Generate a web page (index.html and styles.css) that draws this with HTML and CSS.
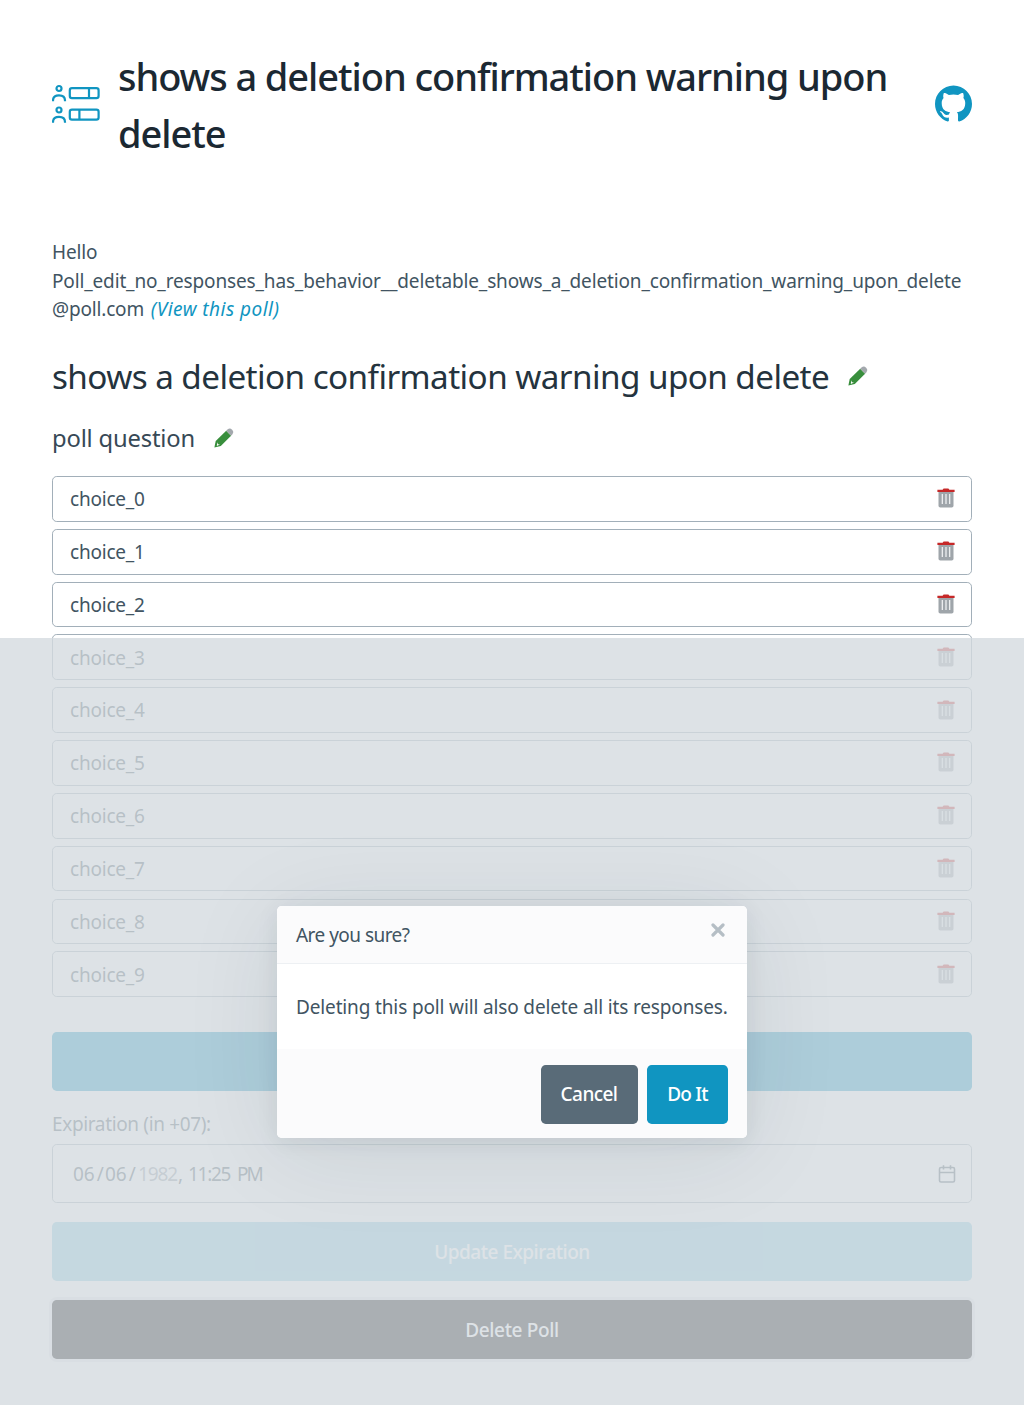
FILE: index.html
```html
<!DOCTYPE html>
<html lang="en">
<head>
<meta charset="utf-8">
<title>Edit poll</title>
<link rel="stylesheet" href="styles.css">
</head>
<body>
<svg class="defs" aria-hidden="true">
  <symbol id="trash" viewBox="0 0 18 20">
    <path fill="#9fa5aa" d="M1.500 3.500h15v14.200q0 1.800-1.800 1.800H3.300Q1.500 19.500 1.500 17.700z"/>
    <path fill="none" stroke="#f4f6f7" stroke-width="1.200" d="M5.300 6v10M9 6v10M12.700 6v10"/>
    <path fill="#c62828" d="M.4 1.800h5.200l1-1.300h4.800l1 1.300h5.200V4H.4z"/>
  </symbol>
  <symbol id="pencil" viewBox="0 0 20 20">
    <path fill="#388e3c" d="M.4 19.400L1.700 13 12.200 2.800l4.900 4.900L6.800 17.900z"/>
    <path fill="#a3a8ad" d="M12.200 2.800l1.300-1.300q2.400-1.900 4.600.2t.3 4.600l-1.300 1.400z"/>
    <path fill="#fff" d="M3.300 14.300l.7 1.900 2 .4-3.200 1.300z"/>
  </symbol>
</svg>
<main class="container">
  <header class="masthead">
    <svg class="logo" viewBox="0 0 48 40" fill="none" stroke="#1095c1" stroke-width="2.200">
      <circle cx="7" cy="4.500" r="2.500"/><path d="M1 17.200v-.7C1 13 3.700 11.300 7 11.300s6 1.700 6 5.200v.7"/>
      <rect x="17.800" y="4.200" width="28.800" height="10" rx="2.200"/><path d="M37 4.200v10"/>
      <circle cx="7" cy="26" r="2.500"/><path d="M1 38.800v-.7c0-3.500 2.700-5.200 6-5.200s6 1.700 6 5.200v.7"/>
      <rect x="17.800" y="25.600" width="28.800" height="10" rx="2.200"/><path d="M27.400 25.600v10"/>
    </svg>
    <h1>shows a deletion confirmation warning upon<br>delete</h1>
    <svg class="github" viewBox="0 0 24 24" fill="#1095c1"><path d="M12 .297c-6.630 0-12 5.373-12 12 0 5.303 3.438 9.800 8.205 11.385.6.113.82-.258.82-.577 0-.285-.01-1.040-.015-2.040-3.338.724-4.042-1.610-4.042-1.610C4.422 18.070 3.633 17.700 3.633 17.700c-1.087-.744.084-.729.084-.729 1.205.084 1.838 1.236 1.838 1.236 1.070 1.835 2.809 1.305 3.495.998.108-.776.417-1.305.76-1.605-2.665-.3-5.466-1.332-5.466-5.930 0-1.310.465-2.380 1.235-3.220-.135-.303-.54-1.523.105-3.176 0 0 1.005-.322 3.300 1.230.96-.267 1.980-.399 3-.405 1.020.006 2.040.138 3 .405 2.280-1.552 3.285-1.230 3.285-1.230.645 1.653.24 2.873.12 3.176.765.84 1.230 1.910 1.230 3.220 0 4.610-2.805 5.625-5.475 5.920.42.36.81 1.096.81 2.220 0 1.606-.015 2.896-.015 3.286 0 .315.21.690.825.570C20.565 22.092 24 17.592 24 12.297c0-6.627-5.373-12-12-12"/></svg>
  </header>

  <p class="hello">Hello<br><span class="email">Poll_edit_no_responses_has_behavior__deletable_shows_a_deletion_confirmation_warning_upon_delete</span><br>@poll.com <a class="view">(View this poll)</a></p>

  <div class="editable poll-title"><h2>shows a deletion confirmation warning upon delete</h2><svg class="pencil"><use href="#pencil"/></svg></div>
  <div class="editable question"><h3>poll question</h3><svg class="pencil"><use href="#pencil"/></svg></div>

  <ul class="choices">
    <li>choice_0<svg class="trash"><use href="#trash"/></svg></li>
    <li>choice_1<svg class="trash"><use href="#trash"/></svg></li>
    <li>choice_2<svg class="trash"><use href="#trash"/></svg></li>
    <li>choice_3<svg class="trash"><use href="#trash"/></svg></li>
    <li>choice_4<svg class="trash"><use href="#trash"/></svg></li>
    <li>choice_5<svg class="trash"><use href="#trash"/></svg></li>
    <li>choice_6<svg class="trash"><use href="#trash"/></svg></li>
    <li>choice_7<svg class="trash"><use href="#trash"/></svg></li>
    <li>choice_8<svg class="trash"><use href="#trash"/></svg></li>
    <li>choice_9<svg class="trash"><use href="#trash"/></svg></li>
  </ul>

  <div class="button add"></div>
  <div class="label">Expiration (in +07):</div>
  <div class="date">
    <span class="num">06</span><span class="slash">/</span><span class="num">06</span><span class="slash">/</span><span class="year">1982</span><span class="comma">,</span><span class="time">11:25</span><span class="pm">PM</span>
    <svg class="calendar" viewBox="0 0 18 18" fill="none" stroke="#415462" stroke-width="1.600"><rect x="1.500" y="2.500" width="15" height="14.500" rx="1.500"/><path d="M1.500 7.500h15M5.500 .2v4.300M12.500 .2v4.300"/></svg>
  </div>
  <div class="button update">Update Expiration</div>
  <div class="button delete">Delete Poll</div>
</main>

<div class="overlay">
  <div class="dialog">
    <div class="dialog-head"><span class="sure">Are you sure?</span><svg class="close" viewBox="0 0 14 14" fill="none" stroke="#b5bec5" stroke-width="3.200" stroke-linecap="round"><path d="M2 2l10 10M12 2L2 12"/></svg></div>
    <div class="dialog-body">Deleting this poll will also delete all its responses.</div>
    <div class="dialog-foot"><div class="button cancel">Cancel</div><div class="button doit">Do It</div></div>
  </div>
</div>
</body>
</html>
```

FILE: styles.css
```css
* { box-sizing: border-box; }
body {
  margin: 0;
  position: relative;
  height: 1405px;
  background: #fff;
  color: #415462;
  font: 500 19px/28.5px "Noto Sans", "Open Sans", sans-serif;
  letter-spacing: -0.022em;
}
h1, h2, h3, p, ul { margin: 0; padding: 0; font-weight: 450; }
svg { display: block; flex: none; }
.defs { position: absolute; width: 0; height: 0; }
.container { width: 920px; margin: 0 auto; padding-top: 48px; }

.masthead { display: flex; align-items: center; height: 114px; }
.logo { width: 48px; height: 40px; margin: 0 18px 2px 0; }
h1 { flex: 1; color: #1b2832; font-size: 38px; line-height: 57px; font-weight: 500; letter-spacing: -0.028em; white-space: nowrap; }
.github { width: 37px; height: 37px; margin-bottom: 3px; }

.hello { margin-top: 76px; white-space: nowrap; font-weight: 450; letter-spacing: -0.009em; }
.email { letter-spacing: -0.0075em; }
.view { color: #1095c1; font-style: italic; letter-spacing: 0.025em; margin-left: 2px; }

.editable { display: flex; align-items: center; }
.poll-title { height: 50px; margin-top: 28px; gap: 19px; }
h2 { color: #24333e; font-size: 33.25px; letter-spacing: -0.0172em; white-space: nowrap; }
.question { height: 36px; margin-top: 19px; gap: 19px; }
h3 { color: #374956; font-size: 23.75px; letter-spacing: -0.007em; }
.pencil { width: 20px; height: 20px; margin-bottom: 1px; }

.choices { margin-top: 19.500px; display: flex; flex-direction: column; gap: 7.150px; list-style: none; letter-spacing: -0.011em; }
.choices li {
  display: flex; align-items: center; justify-content: space-between;
  height: 45.7px; padding: 1px 16px 0 17px;
  border: 1px solid #a2afb9; border-radius: 4.750px;
}
.trash { width: 18px; height: 20px; margin-top: -2px; }

.button {
  display: flex; align-items: center; justify-content: center;
  height: 59px; padding-top: 1px; border-radius: 4.750px;
  background: #1095c1; color: #fff;
}
.add { margin-top: 35px; }
.label { margin-top: 19px; height: 28px; font-weight: 450; letter-spacing: -0.019em; }
.date {
  display: flex; align-items: center; margin-top: 6px; height: 59px; padding: 1px 15px 0 20px;
  border: 1px solid #a2afb9; border-radius: 4.750px; font-weight: 450;
}
.num { width: 22px; letter-spacing: -0.01em; }
.slash { width: 10px; text-align: center; }
.year { width: 40px; margin-left: 1px; opacity: .6; letter-spacing: -0.06em; }
.comma { width: 10px; }
.time { width: 49px; letter-spacing: -0.067em; }
.pm { letter-spacing: -0.1em; }
.calendar { width: 18px; height: 18px; margin-left: auto; }
.update { margin-top: 19px; opacity: .5; letter-spacing: -0.026em; }
.delete { margin-top: 19px; background: #000; box-shadow: 0 0 0 3px rgba(89, 107, 120, .125); letter-spacing: -0.018em; }

/* The backdrop covers the lower, scrolled-to viewport of the page. */
.overlay {
  position: absolute; left: 0; right: 0; bottom: 0; height: 767px;
  display: flex; align-items: center; justify-content: center;
  background: rgba(213, 219, 224, .8);
  overflow: hidden;
}
.dialog {
  width: 470px; height: 232px; background: #fff; border-radius: 4.750px; overflow: hidden;
  box-shadow: 0 4px 22px rgba(27, 40, 50, .08), 0 12px 100px rgba(27, 40, 50, .09);
}
.dialog-head { display: flex; justify-content: space-between; height: 58px; padding: 15px 22px 0 19px; background: #fbfbfc; border-bottom: 1px solid #edf0f3; font-weight: 450; }
.sure { letter-spacing: -0.028em; }
.close { width: 14px; height: 14px; margin-top: 2px; }
.dialog-body { height: 85px; padding: 29px 0 0 19px; font-weight: 450; letter-spacing: -0.0075em; white-space: nowrap; }
.dialog-foot { display: flex; justify-content: flex-end; gap: 9.500px; height: 89px; padding: 16px 19px 0 0; background: #fbfbfc; }
.cancel { width: 97px; background: #596b78; letter-spacing: -0.03em; }
.doit { width: 81px; letter-spacing: -0.04em; }
.choices li { font-weight: 450; }
```
